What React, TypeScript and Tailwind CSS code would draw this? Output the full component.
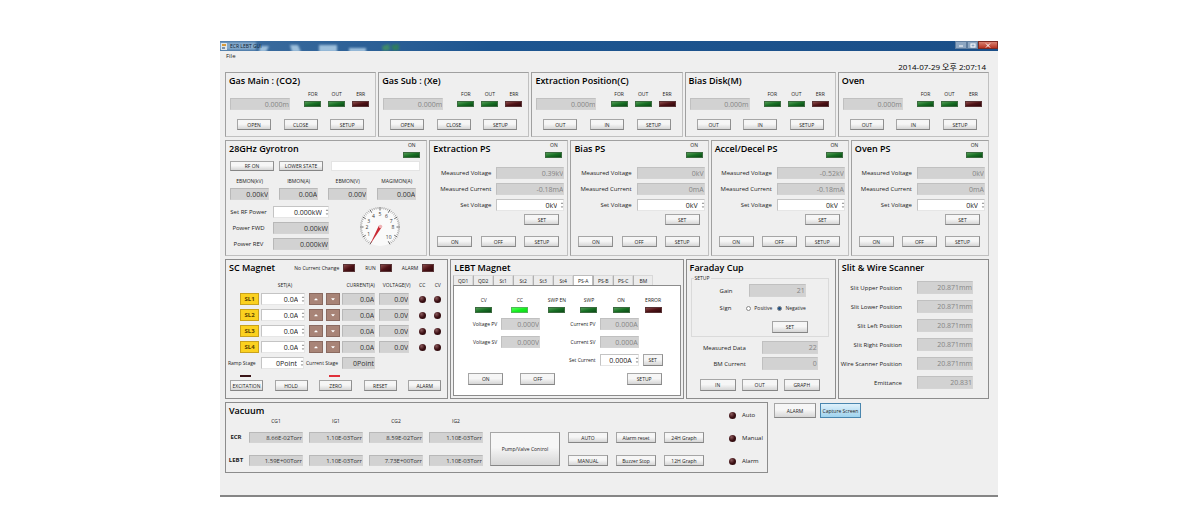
import { useState } from 'react'
import type { ReactNode } from 'react'
import clsx from 'clsx'
import { FaCaretUp, FaCaretDown } from 'react-icons/fa'

const gasPanels = [
  { title: 'Gas Main : (CO2)', buttons: ['OPEN', 'CLOSE', 'SETUP'] },
  { title: 'Gas Sub : (Xe)', buttons: ['OPEN', 'CLOSE', 'SETUP'] },
  { title: 'Extraction Position(C)', buttons: ['OUT', 'IN', 'SETUP'] },
  { title: 'Bias Disk(M)', buttons: ['OUT', 'IN', 'SETUP'] },
  { title: 'Oven', buttons: ['OUT', 'IN', 'SETUP'] }
]

const powerSupplies = [
  { title: 'Extraction PS', voltage: '0.39kV', current: '-0.18mA' },
  { title: 'Bias PS', voltage: '0kV', current: '0mA' },
  { title: 'Accel/Decel PS', voltage: '-0.52kV', current: '-0.18mA' },
  { title: 'Oven PS', voltage: '0kV', current: '0mA' }
]

const gyrotronMonitors = [
  { label: 'EBMON(kV)', value: '0.00kV' },
  { label: 'IBMON(A)', value: '0.00A' },
  { label: 'EBMON(V)', value: '0.00V' },
  { label: 'MAGIMON(A)', value: '0.00A' }
]

const coils = ['SL1', 'SL2', 'SL3', 'SL4']

const magnetButtons = [
  { label: 'EXCITATION', bar: 'bg-[#3a1518]' },
  { label: 'HOLD', bar: 'bg-transparent' },
  { label: 'ZERO', bar: 'bg-[#e0303a]' },
  { label: 'RESET', bar: 'bg-transparent' },
  { label: 'ALARM', bar: 'bg-transparent' }
]

const tabs = ['QD1', 'QD2', 'St1', 'St2', 'St3', 'St4', 'PS-A', 'PS-B', 'PS-C', 'BM']

const slits = [
  { label: 'Slit Upper Position', value: '20.871mm' },
  { label: 'Slit Lower Position', value: '20.871mm' },
  { label: 'Slit Left Position', value: '20.871mm' },
  { label: 'Slit Right Position', value: '20.871mm' },
  { label: 'Wire Scanner Position', value: '20.871mm' },
  { label: 'Emittance', value: '20.831' }
]

const gauges = ['CG1', 'IG1', 'CG2', 'IG2']

const vacuum = [
  { name: 'ECR', values: ['8.66E-02Torr', '1.10E-03Torr', '8.59E-02Torr', '1.10E-03Torr'] },
  { name: 'LEBT', values: ['1.59E+00Torr', '1.10E-03Torr', '7.73E+00Torr', '1.10E-03Torr'] }
]

type LedColor = 'green' | 'lime' | 'red'

const ledColors: Record<LedColor, string> = {
  green: 'bg-linear-to-br from-[#4f9a54] via-[#177024] to-[#0c4a17] border-[#3c6b40]',
  lime: 'bg-linear-to-br from-[#4dff55] via-[#14f01e] to-[#10d51c] border-[#4fb955]',
  red: 'bg-linear-to-br from-[#8a4a4a] via-[#4f1216] to-[#2f080c] border-[#5a3436]'
}

function Panel({ title, dark, className, children }: { title?: string; dark?: boolean; className?: string; children: ReactNode }) {
  return (
    <section
      className={clsx(
        'border',
        title && 'pt-[2px]',
        dark ? 'border-[#8c8c8c]' : 'border-[#a0a0a0] border-r-[#c0c0c0] border-b-[#c0c0c0]',
        className
      )}
    >
      {title && <PanelTitle>{title}</PanelTitle>}
      {children}
    </section>
  )
}

function PanelTitle({ children }: { children: ReactNode }) {
  return <h2 className="pl-[3px] text-[9px] leading-[12px] font-semibold text-black whitespace-nowrap">{children}</h2>
}

function Led({ label, color }: { label: string; color: LedColor }) {
  return (
    <div className="flex w-[17px] flex-col items-center gap-[3px]">
      <span className="text-[5px] leading-[8px] whitespace-nowrap">{label}</span>
      <span className={clsx('h-[6px] w-[17px] border', ledColors[color])} />
    </div>
  )
}

function Dot() {
  return <span className="block size-[7px] rounded-full bg-radial-[at_35%_30%] from-[#8a5a5c] via-[#3d1014] to-[#1f0608]" />
}

function Btn({ className, children }: { className?: string; children: ReactNode }) {
  return (
    <button
      type="button"
      className={clsx(
        'flex shrink-0 items-center justify-center border border-[#a6a6a6] border-r-[#8f8f8f] border-b-[#858585] bg-linear-to-b from-[#f6f6f6] from-45% to-[#d6d6d6] text-[5px] leading-[8px] whitespace-nowrap',
        className
      )}
    >
      {children}
    </button>
  )
}

type FieldProps = { id?: string; label?: string; value: string; kind?: 'disabled' | 'readout' | 'edit'; small?: boolean; className?: string }

function Field({ id, label, value, kind = 'disabled', small, className }: FieldProps) {
  return (
    <div className={clsx('relative', className)}>
      <input
        id={id}
        aria-label={label}
        defaultValue={value}
        readOnly={kind !== 'edit'}
        className={clsx(
          'block size-full border text-right outline-none',
          small ? 'text-[6px]' : 'text-[7px]',
          kind === 'disabled' && 'border-[#c0c0c0] border-r-[#d4d4d4] border-b-[#d4d4d4] bg-[#d2d2d2] text-[#858585]',
          kind === 'readout' && 'border-[#b8b8b8] border-r-[#d4d4d4] border-b-[#d4d4d4] bg-[#d2d2d2] text-[#333333]',
          kind === 'edit' && 'border-[#c4c4c4] border-r-[#e6e6e6] border-b-[#e6e6e6] bg-white pr-[6px] text-[#222222]'
        )}
      />
      {kind === 'edit' && (
        <span className="pointer-events-none absolute inset-y-0 right-0 flex flex-col items-center justify-center text-[#777777]">
          <FaCaretUp size={4} />
          <FaCaretDown size={4} />
        </span>
      )}
    </div>
  )
}

function TitleBar() {
  return (
    <header className="relative flex h-[10px] items-center justify-between overflow-hidden bg-linear-to-r from-[#3d6d9e] via-[#1d5590] via-35% to-[#1b4f88]">
      {/* desktop icons seen through the glass */}
      <svg className="absolute inset-y-0 left-0 h-full w-[200px]" viewBox="0 0 200 10" preserveAspectRatio="none" aria-hidden="true">
        <defs>
          <filter id="glass"><feGaussianBlur stdDeviation="1.2" /></filter>
        </defs>
        <g filter="url(#glass)" fill="#9dbfdb">
          <rect x="-4" y="1" width="40" height="8" opacity="0.75" />
          <path d="M40 5h9l-3 6h-7z" />
          <path d="M70 4h8l3 7h-9z" />
          <rect x="99" y="4" width="18" height="7" />
          <path d="M129 7h17v4h-17z" />
          <path d="M162 5l7-2 1 6-7 1z" fill="#3f8a6a" />
          <path d="M171 4l8-1v6l-6 1z" fill="#2e7b62" />
        </g>
      </svg>
      <span className="relative flex items-center gap-[3px] pl-[1px] text-[5px] leading-[8px] text-[#0c1c30]">
        <svg width="6" height="7" viewBox="0 0 6 7" aria-hidden="true">
          <rect width="6" height="7" fill="#dfe6ea" />
          <path d="M1 1h4v2H1z" fill="#d69a3a" />
          <path d="M1 4h3v2H1z" fill="#7b93aa" />
        </svg>
        ECR LEBT GUI
      </span>
      <span className="flex self-start text-white">
        <button type="button" aria-label="Minimize" className="flex h-[8px] w-[12px] items-center justify-center border border-[#5f7d9e] bg-[#8ea7c2]">
          <svg width="6" height="4" viewBox="0 0 6 4"><path d="M1 3h4" stroke="white" /></svg>
        </button>
        <button type="button" aria-label="Maximize" className="flex h-[8px] w-[11px] items-center justify-center border border-[#5f7d9e] bg-[#8ea7c2]">
          <svg width="6" height="5" viewBox="0 0 6 5"><rect x="1" y="1" width="4" height="3" fill="none" stroke="white" /></svg>
        </button>
        <button type="button" aria-label="Close" className="flex h-[8px] w-[20px] items-center justify-center border border-[#7c2a22] bg-linear-to-b from-[#d98070] to-[#b5301f]">
          <svg width="6" height="5" viewBox="0 0 6 5"><path d="M1 .5l4 4M5 .5l-4 4" stroke="white" /></svg>
        </button>
      </span>
    </header>
  )
}

function GasPanel({ title, buttons }: { title: string; buttons: string[] }) {
  return (
    <Panel title={title}>
      <div className="mt-[3px] flex items-end justify-between pr-[6px] pl-[4px]">
        <Field label={`${title} value`} value="0.000m" className="h-[12px] w-[60px]" />
        <div className="flex gap-[7px] pb-[3px]">
          <Led label="FOR" color="green" />
          <Led label="OUT" color="green" />
          <Led label="ERR" color="red" />
        </div>
      </div>
      <div className="mt-[9px] flex justify-between px-[11px] pb-[6px]">
        {buttons.map((b) => (
          <Btn key={b} className="h-[11px] w-[34px]">{b}</Btn>
        ))}
      </div>
    </Panel>
  )
}

// dial runs from 0 to 10 over 300 degrees, zero at the lower left
function Dial() {
  const point = (n: number, r: number) => {
    const a = ((120 + n * 30) * Math.PI) / 180
    return [21 + r * Math.cos(a), 21 + r * Math.sin(a)]
  }
  return (
    <svg width="42" height="42" viewBox="0 0 42 42" role="img" aria-label="RF power gauge">
      <circle cx="21" cy="21" r="19" fill="#fafafa" />
      {[...Array(51)].map((_, i) => {
        const [x1, y1] = point(i / 5, i % 5 === 0 ? 16.5 : 18)
        const [x2, y2] = point(i / 5, 20)
        return <line key={i} x1={x1} y1={y1} x2={x2} y2={y2} stroke="#555555" strokeWidth={i % 5 === 0 ? 0.9 : 0.5} />
      })}
      {[1, 2, 3, 4, 5, 6, 7, 8, 10].map((n) => {
        const [x, y] = point(n === 10 ? 9.6 : n, 13)
        return <text key={n} x={x} y={y + 2} fontSize="5" textAnchor="middle" fill="#333333">{n}</text>
      })}
      <path d="M22.5 21.5L11 38.5 19.8 19.8z" fill="#c92a35" />
      <circle cx="21.5" cy="20.5" r="1.8" fill="#efb3b6" />
    </svg>
  )
}

function GyrotronPanel() {
  return (
    <Panel>
      <div className="flex items-start justify-between pr-[6px]">
        <div className="pt-[2px]"><PanelTitle>28GHz Gyrotron</PanelTitle></div>
        <Led label="ON" color="green" />
      </div>
      <div className="mt-[3px] flex pr-[6px] pl-[4px]">
        <Btn className="h-[10px] w-[44px]">RF ON</Btn>
        <Btn className="ml-[5px] h-[10px] w-[44px]">LOWER STATE</Btn>
        <input aria-label="Gyrotron state" className="ml-[8px] h-[10px] min-w-0 flex-1 border border-[#e4e4e4] bg-white text-[6px] outline-none" />
      </div>
      <div className="mt-[6px] grid grid-cols-4 gap-[10px] pr-[10px] pl-[4px]">
        {gyrotronMonitors.map((m, i) => (
          <div key={m.label} className="flex flex-col items-center gap-[3px]">
            <label htmlFor={`mon-${i}`} className="text-[5px] leading-[8px] whitespace-nowrap">{m.label}</label>
            <Field id={`mon-${i}`} value={m.value} kind="readout" className="h-[12px] w-full" />
          </div>
        ))}
      </div>
      <div className="mt-[6px] flex items-start justify-between pr-[25px] pb-[5px] pl-[4px]">
        <div className="grid grid-cols-[37px_56px] items-center gap-x-[6px] gap-y-[4px] text-center text-[6px] leading-[8px]">
          <label htmlFor="rf-set" className="whitespace-nowrap">Set RF Power</label>
          <Field id="rf-set" value="0.000kW" kind="edit" className="h-[12px]" />
          <label htmlFor="rf-fwd">Power FWD</label>
          <Field id="rf-fwd" value="0.00kW" kind="readout" className="h-[12px]" />
          <label htmlFor="rf-rev">Power REV</label>
          <Field id="rf-rev" value="0.000kW" kind="readout" className="h-[12px]" />
        </div>
        <Dial />
      </div>
    </Panel>
  )
}

function PowerSupplyPanel({ title, voltage, current }: { title: string; voltage: string; current: string }) {
  const id = title.replace(/\W/g, '')
  return (
    <Panel>
      <div className="flex items-start justify-between pr-[5px]">
        <div className="pt-[2px]"><PanelTitle>{title}</PanelTitle></div>
        <Led label="ON" color="green" />
      </div>
      <div className="mt-[9px] grid grid-cols-[1fr_68px] items-center gap-x-[5px] gap-y-[4px] pr-[3px] text-right text-[6px] leading-[8px]">
        <label htmlFor={`${id}-v`}>Measured Voltage</label>
        <Field id={`${id}-v`} value={voltage} className="h-[12px]" />
        <label htmlFor={`${id}-c`}>Measured Current</label>
        <Field id={`${id}-c`} value={current} className="h-[12px]" />
        <label htmlFor={`${id}-s`}>Set Voltage</label>
        <Field id={`${id}-s`} value="0kV" kind="edit" className="h-[12px]" />
      </div>
      <div className="mt-[3px] flex justify-end pr-[8px]">
        <Btn className="h-[11px] w-[35px]">SET</Btn>
      </div>
      <div className="mt-[11px] flex justify-between pr-[8px] pb-[7px] pl-[7px]">
        <Btn className="h-[11px] w-[35px]">ON</Btn>
        <Btn className="h-[11px] w-[35px]">OFF</Btn>
        <Btn className="h-[11px] w-[35px]">SETUP</Btn>
      </div>
    </Panel>
  )
}

function Status({ label }: { label: string }) {
  return (
    <span className="flex items-center gap-[4px] text-[5px] leading-[8px] whitespace-nowrap">
      {label}
      <span className={clsx('h-[8px] w-[12px] border', ledColors.red)} />
    </span>
  )
}

function ScMagnetPanel() {
  const arrow = 'flex h-[12px] w-[14px] items-center justify-center border border-[#8a6a60] bg-[#a88477] text-white'
  return (
    <Panel dark>
      <div className="flex items-center justify-between pt-[2px] pr-[13px]">
        <PanelTitle>SC Magnet</PanelTitle>
        <div className="flex gap-[10px]">
          <Status label="No Current Change" />
          <Status label="RUN" />
          <Status label="ALARM" />
        </div>
      </div>
      <div className="mt-[7px] pr-[2px] pl-[14px]">
        <table className="w-full table-fixed text-[5px] leading-[8px]">
          <colgroup>
            <col className="w-[21px]" />
            <col className="w-[48px]" />
            <col className="w-[17px]" />
            <col className="w-[16px]" />
            <col className="w-[37px]" />
            <col className="w-[35px]" />
            <col className="w-[16px]" />
            <col className="w-[15px]" />
          </colgroup>
          <thead>
            <tr className="h-[12px] align-top whitespace-nowrap [&>th]:p-0 [&>th]:font-normal">
              <th />
              <th>SET(A)</th>
              <th />
              <th />
              <th>CURRENT(A)</th>
              <th>VOLTAGE(V)</th>
              <th>CC</th>
              <th>CV</th>
            </tr>
          </thead>
          <tbody>
            {coils.map((c) => (
              <tr key={c} className="h-[16px] align-top [&>td]:p-0">
                <td>
                  <div className="mr-[2px] h-[12px] border border-[#c9a21c] bg-[#fbd11f] text-center text-[6px] leading-[10px] font-bold text-[#5a4300]">{c}</div>
                </td>
                <td><Field label={`${c} set`} value="0.0A" kind="edit" className="mr-[4px] h-[12px]" /></td>
                <td><button type="button" aria-label={`${c} up`} className={arrow}><FaCaretUp size={6} /></button></td>
                <td><button type="button" aria-label={`${c} down`} className={arrow}><FaCaretDown size={6} /></button></td>
                <td><Field label={`${c} current`} value="0.0A" kind="readout" className="mr-[4px] h-[12px]" /></td>
                <td><Field label={`${c} voltage`} value="0.0V" kind="readout" className="mr-[5px] h-[12px]" /></td>
                <td><div className="flex h-[12px] items-center justify-center"><Dot /></div></td>
                <td><div className="flex h-[12px] items-center justify-center"><Dot /></div></td>
              </tr>
            ))}
          </tbody>
        </table>
      </div>
      <div className="flex items-center pl-[2px] text-[5px] leading-[8px]">
        <label htmlFor="ramp" className="w-[33px] whitespace-nowrap">Ramp Stage</label>
        <Field id="ramp" value="0Point" kind="edit" className="h-[12px] w-[43px]" />
        <label htmlFor="stage" className="w-[36px] text-center whitespace-nowrap">Current Stage</label>
        <Field id="stage" value="0Point" kind="readout" className="ml-[2px] h-[12px] w-[33px]" />
      </div>
      <div className="mt-[6px] flex justify-between pr-[6px] pb-[7px] pl-[4px]">
        {magnetButtons.map((b) => (
          <div key={b.label}>
            <div className={clsx('mb-[3px] ml-[10px] h-[2px] w-[11px]', b.bar)} />
            <Btn className="h-[11px] w-[33px]">{b.label}</Btn>
          </div>
        ))}
      </div>
    </Panel>
  )
}

function LebtMagnetPanel() {
  const [tab, setTab] = useState('PS-A')
  return (
    <Panel dark title="LEBT Magnet" className="flex flex-col pb-[2px]">
      <div role="tablist" className="mt-[1px] flex items-end pl-[2px]">
        {tabs.map((t) => (
          <button
            key={t}
            type="button"
            role="tab"
            aria-selected={t === tab}
            onClick={() => setTab(t)}
            className={clsx(
              'h-[10px] w-[20px] border border-b-0 text-[5px] leading-[8px] whitespace-nowrap',
              t === tab ? 'border-[#bdbdbd] bg-white' : 'border-[#d8d8d8] border-l-[#b0b0b0] bg-[#ececec]'
            )}
          >
            {t}
          </button>
        ))}
      </div>
      <div role="tabpanel" className="mx-[2px] flex-1 border border-[#8c8c8c] bg-white pt-[10px]">
        <div className="grid grid-cols-[36fr_37fr_32fr_32fr_32fr_17px] pr-[18px] pl-[21px]">
          <Led label="CV" color="green" />
          <Led label="CC" color="lime" />
          <Led label="SWP EN" color="green" />
          <Led label="SWP" color="green" />
          <Led label="ON" color="green" />
          <Led label="ERROR" color="red" />
        </div>
        <div className="mt-[5px] grid grid-cols-[43px_39px_1fr_39px_37px] items-center gap-x-[4px] gap-y-[6px] text-right text-[5px] leading-[8px]">
          <label htmlFor="v-pv">Voltage PV</label>
          <Field id="v-pv" value="0.000V" className="h-[12px]" />
          <label htmlFor="c-pv">Current PV</label>
          <Field id="c-pv" value="0.000A" className="h-[12px]" />
          <span />
          <label htmlFor="v-sv">Voltage SV</label>
          <Field id="v-sv" value="0.000V" className="h-[12px]" />
          <label htmlFor="c-sv">Current SV</label>
          <Field id="c-sv" value="0.000A" className="h-[12px]" />
          <span />
          <label htmlFor="c-set" className="col-start-3">Set Current</label>
          <Field id="c-set" value="0.000A" kind="edit" className="h-[12px]" />
          <Btn className="h-[12px] w-[20px]">SET</Btn>
        </div>
        <div className="mt-[7px] flex pr-[18px] pl-[14px]">
          <Btn className="h-[12px] w-[35px]">ON</Btn>
          <Btn className="ml-[17px] h-[12px] w-[35px]">OFF</Btn>
          <Btn className="ml-auto h-[12px] w-[35px]">SETUP</Btn>
        </div>
      </div>
    </Panel>
  )
}

function FaradayPanel() {
  const radio = 'size-[5px] appearance-none rounded-full border border-[#8a8a8a] bg-white checked:bg-[#1c4f86]'
  return (
    <Panel dark title="Faraday Cup">
      <fieldset className="mr-[6px] ml-[4px] border border-[#dadada] pb-[3px] text-[6px] leading-[8px]">
        <legend className="ml-[2px] px-[1px] text-[5px]">SETUP</legend>
        <div className="mt-[2px] flex items-center justify-between pr-[22px] pl-[28px]">
          <label htmlFor="gain">Gain</label>
          <Field id="gain" value="21" className="h-[13px] w-[57px]" />
        </div>
        <div className="mt-[7px] flex items-center pr-[22px] pl-[28px]">
          <span>Sign</span>
          <div className="ml-auto flex items-center gap-[5px] text-[5px]">
            <label className="flex items-center gap-[3px]"><input type="radio" name="sign" className={radio} />Positive</label>
            <label className="flex items-center gap-[3px]"><input type="radio" name="sign" defaultChecked className={radio} />Negative</label>
          </div>
        </div>
        <div className="mt-[9px] flex justify-end pr-[20px]">
          <Btn className="h-[12px] w-[36px]">SET</Btn>
        </div>
      </fieldset>
      <div className="mt-[4px] grid grid-cols-[1fr_56px] items-center gap-x-[16px] gap-y-[3px] pr-[17px] text-right text-[6px] leading-[8px]">
        <label htmlFor="fc-data">Measured Data</label>
        <Field id="fc-data" value="22" className="h-[13px]" />
        <label htmlFor="fc-bm">BM Current</label>
        <Field id="fc-bm" value="0" className="h-[13px]" />
      </div>
      <div className="mt-[9px] flex justify-between pr-[15px] pb-[6px] pl-[13px]">
        <Btn className="h-[12px] w-[36px]">IN</Btn>
        <Btn className="h-[12px] w-[36px]">OUT</Btn>
        <Btn className="h-[12px] w-[36px]">GRAPH</Btn>
      </div>
    </Panel>
  )
}

function SlitPanel() {
  return (
    <Panel dark title="Slit & Wire Scanner">
      <div className="mt-[7px] grid grid-cols-[1fr_56px] items-center gap-x-[15px] gap-y-[6px] pr-[15px] text-right text-[6px] leading-[8px]">
        {slits.map((s, i) => (
          <div key={s.label} className="contents">
            <label htmlFor={`slit-${i}`} className="whitespace-nowrap">{s.label}</label>
            <Field id={`slit-${i}`} value={s.value} className="h-[13px]" />
          </div>
        ))}
      </div>
    </Panel>
  )
}

function VacuumPanel() {
  return (
    <Panel dark title="Vacuum" className="grid grid-cols-[260px_auto_1fr] items-start">
      <table className="col-start-1 w-full table-fixed text-[5px] leading-[8px]">
        <thead>
          <tr className="h-[15px] align-top [&>th]:p-0 [&>th]:font-normal">
            <th className="w-[20px]" />
            {gauges.map((g) => <th key={g}>{g}</th>)}
          </tr>
        </thead>
        <tbody>
          {vacuum.map((v) => (
            <tr key={v.name} className="h-[23px] align-top last:h-[17px] [&>td]:p-0">
              <th className="p-0 text-center text-[6px] leading-[11px] font-bold">{v.name}</th>
              {v.values.map((x, i) => (
                <td key={i}><Field label={`${v.name} ${gauges[i]}`} value={x} kind="readout" small className="mr-[3px] ml-[3px] h-[11px]" /></td>
              ))}
            </tr>
          ))}
        </tbody>
      </table>
      <div className="col-start-2 row-span-2 row-start-1 ml-[4px] flex items-end gap-[8px] self-end pb-[6px]">
        <Btn className="h-[34px] w-[70px]">Pump/Valve Control</Btn>
        <div className="grid grid-cols-3 gap-x-[8px] gap-y-[12px]">
          {['AUTO', 'Alarm reset', '24H Graph', 'MANUAL', 'Buzzer Stop', '12H Graph'].map((b) => (
            <Btn key={b} className="h-[11px] w-[40px]">{b}</Btn>
          ))}
        </div>
      </div>
      <ul className="col-start-3 row-span-2 row-start-1 flex w-[38px] flex-col gap-[15px] justify-self-end pt-[6px] text-[6px] leading-[8px]">
        {['Auto', 'Manual', 'Alarm'].map((s) => (
          <li key={s} className="flex items-center gap-[6px]"><Dot />{s}</li>
        ))}
      </ul>
    </Panel>
  )
}

export default function App() {
  return (
    <div className="min-h-screen bg-white pt-[41px] pr-[192px] pl-[220px] font-['Open_Sans','Noto_Sans_CJK_KR',sans-serif] text-[#222222]">
      <div className="border-b-2 border-[#858585] bg-[#efefef] pb-[22px]">
        <TitleBar />
        <nav className="pl-[6px] text-[6px] leading-[10px]">
          <button type="button">File</button>
        </nav>
        <p className="pr-[12px] text-right text-[8px] leading-[11px] text-black">2014-07-29 오후 2:07:14</p>

        <main className="flex flex-col gap-[3px] pr-[9px] pl-[5px]">
          <div className="grid grid-cols-5 gap-[2px]">
            {gasPanels.map((g) => <GasPanel key={g.title} {...g} />)}
          </div>
          <div className="grid grid-cols-[202fr_139fr_138fr_138fr_138fr] gap-[2px]">
            <GyrotronPanel />
            {powerSupplies.map((p) => <PowerSupplyPanel key={p.title} {...p} />)}
          </div>
          <div className="grid grid-cols-[223fr_233fr_150fr_151fr] gap-[2px]">
            <ScMagnetPanel />
            <LebtMagnetPanel />
            <FaradayPanel />
            <SlitPanel />
          </div>
          <div className="grid grid-cols-[543fr_215fr] gap-[6px]">
            <VacuumPanel />
            <div className="flex items-start gap-[4px] pt-[1px]">
              <Btn className="h-[15px] w-[42px]">ALARM</Btn>
              <button type="button" className="h-[15px] w-[41px] border border-[#4a86ae] bg-linear-to-b from-[#dff1fb] to-[#9fd3ee] text-[5px] leading-[8px] whitespace-nowrap">
                Capture Screen
              </button>
            </div>
          </div>
        </main>
      </div>
    </div>
  )
}
